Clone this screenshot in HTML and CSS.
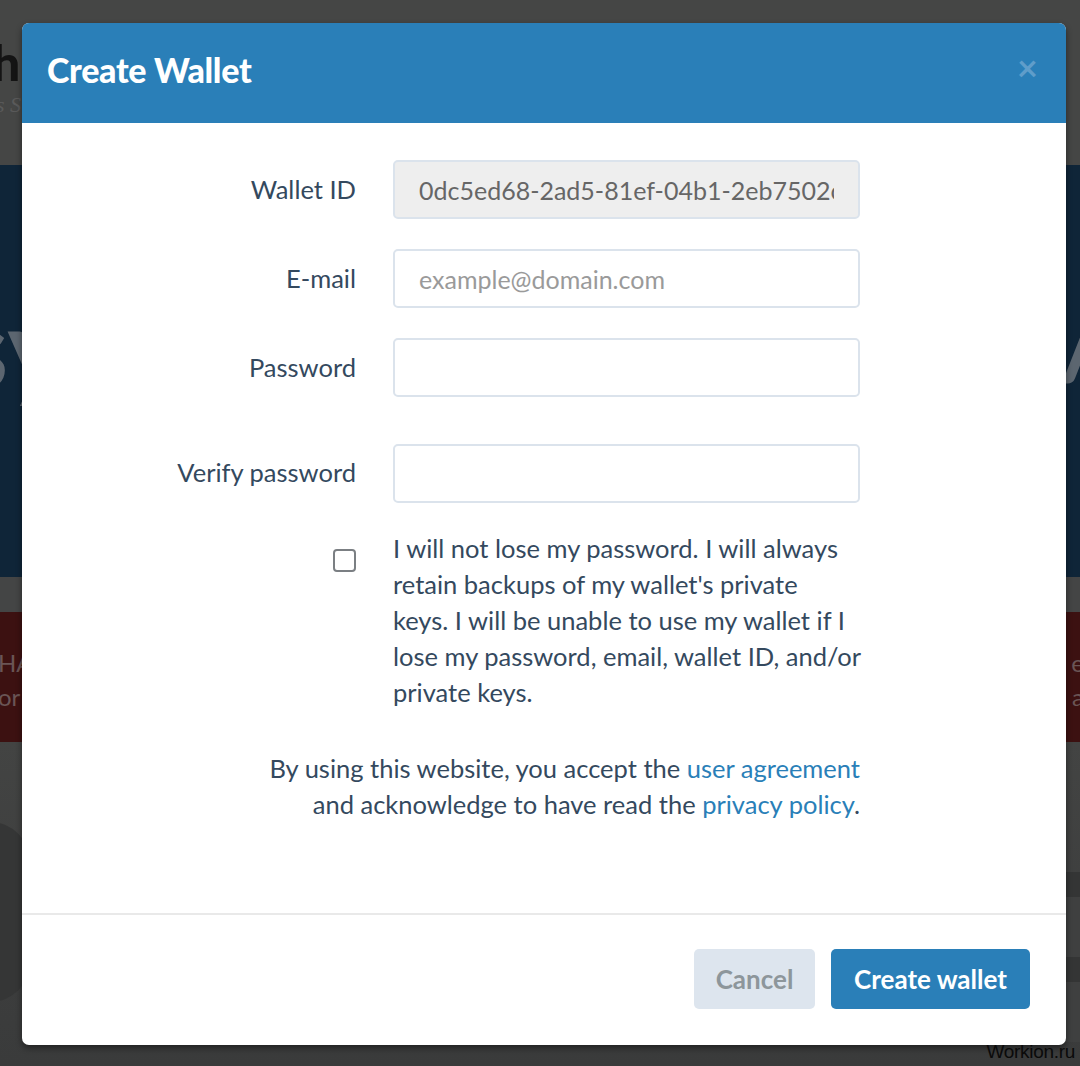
FILE: index.html
```html
<!DOCTYPE html>
<html lang="en">
<head>
<meta charset="utf-8">
<title>Create Wallet</title>
<link rel="stylesheet" href="styles.css">
</head>
<body>
<div class="page">
  <div class="band band-top">
    <div class="brand">h</div>
    <div class="tag">s S</div>
  </div>
  <div class="band band-hero">
    <div class="hero-l"><span class="big">sy</span><span class="small">e</span></div>
    <div class="hero-r"><span class="big">/</span><span class="small">w</span></div>
  </div>
  <div class="band band-gap"></div>
  <div class="band band-alert">
    <div class="alert-l"><span>HA</span><span>or</span></div>
    <div class="alert-r"><span>e</span><span>a</span></div>
  </div>
  <div class="band band-rest">
    <div class="blob"></div>
    <div class="rows">
      <div class="row-dark"></div>
      <div class="row-mid"></div>
      <div class="row-dark"></div>
      <div class="row-mid"></div>
    </div>
  </div>
</div>

<div class="modal">
  <div class="modal-header">
    <h1 class="modal-title">Create Wallet</h1>
    <span class="close">&times;</span>
  </div>
  <div class="modal-body">
    <div class="form">
      <label class="label" for="wid">Wallet ID</label>
      <input class="field field-readonly" id="wid" type="text" readonly value="0dc5ed68-2ad5-81ef-04b1-2eb7502c">

      <label class="label" for="mail">E-mail</label>
      <input class="field" id="mail" type="text" placeholder="example@domain.com">

      <label class="label" for="pw">Password</label>
      <input class="field" id="pw" type="password">

      <label class="label label-verify" for="pw2">Verify password</label>
      <input class="field field-verify" id="pw2" type="password">

      <div class="check-cell"><span class="checkbox"></span></div>
      <p class="check-text">I will not lose my password. I will always<br>retain backups of my wallet's private<br>keys. I will be unable to use my wallet if I<br>lose my password, email, wallet ID, and/or<br>private keys.</p>
    </div>
    <p class="terms">By using this website, you accept the <a class="link">user agreement</a><br>and acknowledge to have read the <a class="link">privacy policy</a>.</p>
  </div>
  <div class="modal-footer">
    <button class="btn btn-cancel">Cancel</button>
    <button class="btn btn-primary">Create wallet</button>
  </div>
</div>

<div class="watermark">Workion.ru</div>
</body>
</html>
```

FILE: styles.css
```css
* { box-sizing: border-box; }
html, body {
  margin: 0;
  padding: 0;
  width: 1080px;
  height: 1066px;
  overflow: hidden;
  background: #444545;
  font-family: Lato, "Open Sans", sans-serif;
}

/* background page (dimmed) */
.page {
  display: flex;
  flex-direction: column;
  height: 1066px;
}
.band { position: relative; overflow: hidden; }
.band-top {
  height: 165px;
  background: #454645;
  padding: 32px 0 0 0;
}
.brand {
  font-family: Lato, sans-serif;
  font-weight: 900;
  font-size: 50px;
  line-height: 60px;
  color: #141414;
  margin-left: -8px;
}
.tag {
  font-family: "Liberation Serif", serif;
  font-style: italic;
  font-size: 22px;
  color: #5a5a5a;
  margin-left: -4px;
}
.band-hero {
  height: 412px;
  background: #0f2538;
  display: flex;
  justify-content: space-between;
}
.hero-l, .hero-r {
  display: flex;
  flex-direction: column;
  color: #5c6670;
  padding-top: 120px;
}
.hero-l { margin-left: -40px; }
.hero-r { margin-right: -30px; align-items: flex-end; padding-top: 110px; }
.big { font-size: 110px; line-height: 120px; font-weight: 700; }
.small { font-size: 40px; line-height: 60px; font-weight: 300; }
.band-gap { height: 35px; background: #444545; }
.band-alert {
  height: 130px;
  background: #3c1111;
  display: flex;
  justify-content: space-between;
  color: #6a5555;
  font-size: 24px;
}
.alert-l, .alert-r {
  display: flex;
  flex-direction: column;
  padding-top: 34px;
  line-height: 34px;
}
.alert-l { margin-left: -2px; }
.alert-r { margin-right: -4px; align-items: flex-end; }
.band-rest {
  flex: 1;
  background: linear-gradient(#434443, #3d3e3e 60%, #3a3b3b);
  display: flex;
  justify-content: space-between;
}
.blob {
  width: 80px;
  height: 180px;
  margin: 80px 0 0 -50px;
  border-radius: 40px;
  background: #353636;
}
.rows {
  display: flex;
  flex-direction: column;
  width: 20px;
  padding-top: 130px;
}
.row-dark { height: 25px; background: #343535; }
.row-mid { height: 60px; background: #3f4040; }

/* modal */
.modal {
  position: absolute;
  left: 22px;
  top: 23px;
  width: 1044px;
  height: 1022px;
  background: #fff;
  border-radius: 7px;
  box-shadow: 0 3px 6px rgba(0,0,0,0.45);
  display: flex;
  flex-direction: column;
  overflow: hidden;
}
.modal-header {
  height: 100px;
  background: #2a7fb8;
  display: flex;
  align-items: center;
  justify-content: space-between;
  padding: 0 28px 8px 25px;
}
.modal-title {
  margin: 0;
  color: #fff;
  font-weight: 900;
  font-size: 34px;
  letter-spacing: -0.3px;
}
.close {
  color: #5f9dca;
  font-weight: 700;
  font-size: 36px;
  line-height: 1;
  margin-bottom: 4px;
}
.modal-body {
  flex: 1;
  padding: 37px 206px 0 0;
}
.form {
  display: grid;
  grid-template-columns: 334px 467px;
  column-gap: 37px;
  row-gap: 30px;
  align-items: center;
}
.label {
  text-align: right;
  font-size: 25.5px;
  color: #34495e;
  margin-top: -2px;
}
.field {
  display: block;
  width: 467px;
  height: 59px;
  margin: 0;
  border: 2px solid #dbe3ec;
  border-radius: 5px;
  padding: 0 24px;
  font-family: Lato, sans-serif;
  font-size: 25px;
  color: #555;
  background: #fff;
  outline: none;
}
.field::placeholder { color: #9a9a9a; opacity: 1; }
.field-readonly { background: #eeeeee; color: #666; }
.label-verify { margin-top: 13px; }
.field-verify { margin-top: 17px; }
.check-cell {
  align-self: start;
  display: flex;
  justify-content: flex-end;
  padding-top: 16px;
}
.checkbox {
  width: 23px;
  height: 23px;
  border: 2px solid #7b7f83;
  border-radius: 4px;
  background: #fff;
}
.check-text {
  margin: -3px 0 0 0;
  font-size: 25.5px;
  line-height: 36px;
  color: #34495e;
  white-space: nowrap;
}
.terms {
  margin: 40px 0 0 0;
  text-align: right;
  font-size: 25.5px;
  line-height: 36px;
  color: #34495e;
}
.link { color: #2a7fb8; }
.modal-footer {
  border-top: 2px solid #e9e9e9;
  padding: 34px 36px 36px;
  display: flex;
  justify-content: flex-end;
  gap: 16px;
}
.btn {
  height: 60px;
  border: none;
  border-radius: 5px;
  font-family: Lato, sans-serif;
  font-weight: 700;
  font-size: 26px;
  padding: 0;
}
.btn-cancel {
  width: 121px;
  background: #dde5ee;
  color: #8d969b;
}
.btn-primary {
  width: 199px;
  background: #2a7fb8;
  color: #fff;
}
.watermark {
  position: absolute;
  right: 5px;
  bottom: 3px;
  font-family: "Liberation Sans", Arial, sans-serif;
  font-size: 19px;
  color: #0a0a0a;
  letter-spacing: -0.3px;
}
```
